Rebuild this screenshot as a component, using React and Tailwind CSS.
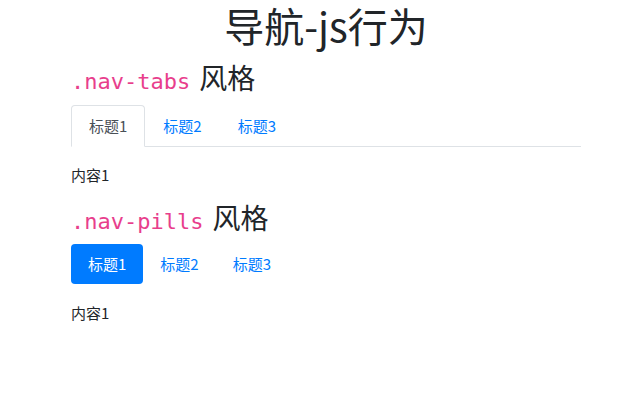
const FONT = '"Noto Sans CJK SC", "Noto Sans", sans-serif';
const MONO = '"DejaVu Sans Mono", "Liberation Mono", monospace';

const tabs = ["标题1", "标题2", "标题3"];

const Heading = ({ code }) => (
  <h2 className="text-[28px] leading-[38px] text-[#212529] flex items-baseline">
    <code className="text-[22px] text-[#e83e8c]" style={{ fontFamily: MONO }}>
      {code}
    </code>
    <span className="ml-[9px]">风格</span>
  </h2>
);

export default function App() {
  return (
    <div className="min-h-screen bg-white pl-[56px]" style={{ fontFamily: FONT }}>
      <div className="w-[540px] px-[15px]">
        <h1 className="pt-[1px] text-center text-[40px] leading-[48px] text-[#212529]">导航-js行为</h1>

        <div className="mt-[9px]">
          <Heading code=".nav-tabs" />
        </div>
        <ul className="mt-[4px] flex border-b border-[#dee2e6]">
          {tabs.map((t, i) => (
            <li key={t} className="-mb-px">
              <a
                className={`block px-[17px] py-[8px] text-[15px] leading-[24px] border rounded-t-[4px] ${
                  i === 0
                    ? "border-[#dee2e6] border-b-white bg-white text-[#495057]"
                    : "border-transparent text-[#007bff]"
                }`}
              >
                {t}
              </a>
            </li>
          ))}
        </ul>
        <p className="mt-[16px] text-[15px] leading-[24px] text-[#212529]">内容1</p>

        <div className="mt-[11px]">
          <Heading code=".nav-pills" />
        </div>
        <ul className="mt-[3px] flex">
          {tabs.map((t, i) => (
            <li key={t}>
              <a
                className={`block px-[17px] py-[8px] text-[15px] leading-[24px] rounded-[4px] ${
                  i === 0 ? "bg-[#007bff] text-white" : "text-[#007bff]"
                }`}
              >
                {t}
              </a>
            </li>
          ))}
        </ul>
        <p className="mt-[17px] text-[15px] leading-[24px] text-[#212529]">内容1</p>
      </div>
    </div>
  );
}
